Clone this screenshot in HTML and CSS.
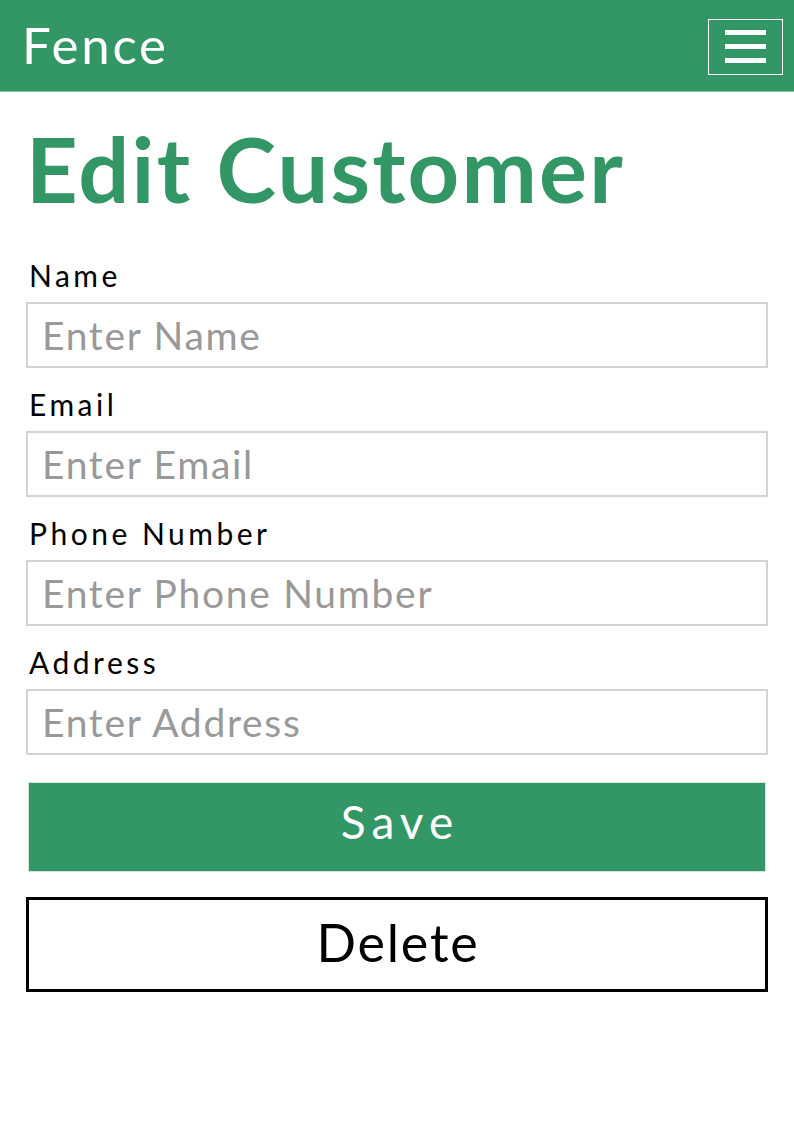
FILE: index.html
```html
<!DOCTYPE html>
<html lang="en">
<head>
<meta charset="utf-8">
<title>Fence - Edit Customer</title>
<link rel="stylesheet" href="styles.css">
</head>
<body>
<header class="topbar">
  <div class="brand">Fence</div>
  <button class="menu-btn" aria-label="Menu">
    <span class="bar"></span>
    <span class="bar"></span>
    <span class="bar"></span>
  </button>
</header>
<main class="content">
  <h1 class="title">Edit Customer</h1>
  <form class="form">
    <label class="label" for="name">Name</label>
    <input class="field" id="name" type="text" placeholder="Enter Name">
    <label class="label" for="email">Email</label>
    <input class="field" id="email" type="text" placeholder="Enter Email">
    <label class="label" for="phone">Phone Number</label>
    <input class="field" id="phone" type="text" placeholder="Enter Phone Number">
    <label class="label" for="address">Address</label>
    <input class="field" id="address" type="text" placeholder="Enter Address">
    <button class="btn btn-save" type="button">Save</button>
    <button class="btn btn-delete" type="button">Delete</button>
  </form>
</main>
</body>
</html>
```
FILE: styles.css
```css
* { box-sizing: border-box; }
html, body { margin: 0; padding: 0; background: #fff; }
body { font-family: "Lato", "Open Sans", sans-serif; color: #000; }

.topbar {
  height: 92px;
  background: #339665;
  display: flex;
  align-items: center;
  justify-content: space-between;
  padding: 0 11px 0 22px;
  border-bottom: 1px solid #7cbf9c;
}
.brand {
  color: #fff;
  font-size: 51px;
  line-height: 1;
  font-weight: 400;
  letter-spacing: 2.8px;
  padding-bottom: 2px;
}
.menu-btn {
  width: 75px;
  height: 56px;
  border: 1px solid #fff;
  background: transparent;
  padding: 0;
  display: flex;
  flex-direction: column;
  align-items: center;
  justify-content: center;
  gap: 9px;
  margin-top: 2px;
}
.bar { display: block; width: 41px; height: 5px; background: #fff; }

.content { padding: 0 26px; }
.title {
  margin: 31px 0 0 0;
  font-size: 90px;
  line-height: 90px;
  font-weight: 700;
  letter-spacing: 2.2px;
  color: #339665;
}
.form { display: flex; flex-direction: column; margin-top: 48px; }
.label {
  font-size: 30px;
  line-height: 29px;
  letter-spacing: 3.5px;
  margin: 0 0 12px 3px;
}
.field {
  height: 66px;
  border: 2px solid #d3d3d3;
  padding: 0 14px;
  font-family: inherit;
  font-size: 39px;
  letter-spacing: 1.7px;
  color: #000;
  margin: 0 0 22px;
  outline: none;
}
.field::placeholder { color: #999; }
.btn {
  font-family: inherit;
  cursor: pointer;
}
.btn-save {
  margin: 5px 2px 0;
  height: 90px;
  background: #339665;
  border: 1px solid #cfe8db;
  color: #fff;
  font-size: 46px;
  letter-spacing: 6px;
  padding: 0 0 11px 6px;
}
.btn-delete {
  margin: 25px 0 0;
  height: 95px;
  background: #fff;
  border: 3px solid #000;
  color: #000;
  font-size: 52px;
  letter-spacing: 1.8px;
  padding: 0 0 6px 2px;
}
```
